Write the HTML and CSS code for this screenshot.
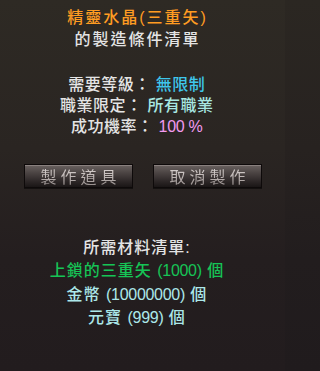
FILE: index.html
```html
<!DOCTYPE html>
<html lang="zh-Hant">
<head>
<meta charset="utf-8">
<title>製造條件清單</title>
<link rel="stylesheet" href="styles.css">
</head>
<body>
<div class="panel">
  <div class="title">
    <div class="line orange">精靈水晶(三重矢)</div>
    <div class="line">的製造條件清單</div>
  </div>
  <div class="info">
    <div class="line">需要等級： <span class="cyan">無限制</span></div>
    <div class="line">職業限定： <span class="pale">所有職業</span></div>
    <div class="line">成功機率： <span class="pink"><span class="num">100 %</span></span></div>
  </div>
  <div class="buttons">
    <button class="btn"><span class="btn-text">製作道具</span></button>
    <button class="btn"><span class="btn-text">取消製作</span></button>
  </div>
  <div class="materials">
    <div class="line">所需材料清單:</div>
    <div class="line green">上鎖的三重矢 <span class="num">(1000)</span> 個</div>
    <div class="line pale2">金幣 <span class="num">(10000000)</span> 個</div>
    <div class="line pale2">元寶 <span class="num">(999)</span> 個</div>
  </div>
</div>
</body>
</html>
```
FILE: styles.css
```css
html {
  margin: 0;
  padding: 0;
  background: linear-gradient(180deg, #2b2722 0%, #272220 40%, #221d1e 70%, #201b1d 100%);
  min-height: 100%;
}
body {
  margin: 0;
  padding: 0;
  width: 285px;
  height: 371px;
  overflow: hidden;
}
.panel {
  width: 285px;
  height: 371px;
  box-sizing: border-box;
  padding-top: 7px;
  background: linear-gradient(180deg, #2e2a24 0%, #2a2522 40%, #241e1f 70%, #221c1e 100%);
  font-family: "Liberation Sans", "Noto Sans CJK TC", sans-serif;
  font-size: 16px;
  font-weight: 500;
  color: #e4e4e4;
  text-align: center;
  display: flex;
  flex-direction: column;
}
.title,
.info,
.materials {
  padding-right: 12px;
}
.title .line {
  line-height: 22px;
  letter-spacing: 2px;
  padding-left: 2px;
}
.orange { color: #ff9c22; }
.info {
  margin-top: 23px;
}
.info .line {
  line-height: 21px;
  letter-spacing: 0.5px;
  padding-left: 0.5px;
}
.cyan { color: #3ec6ec; }
.pale { color: #a8e8e2; }
.pink { color: #f29af0; }
.num {
  letter-spacing: -0.3px;
}
.buttons {
  margin-top: 27px;
  display: flex;
  justify-content: center;
  gap: 20px;
  padding-left: 1px;
}
.btn {
  width: 109px;
  height: 24px;
  margin: 0;
  padding: 0 0 0 4px;
  border: 1px solid #0e0a0a;
  background: linear-gradient(180deg, #6a6260 0%, #4c4544 35%, #2c2626 75%, #1a1616 100%);
  box-shadow: inset 0 1px 0 rgba(200, 190, 185, 0.35), 0 1px 0 rgba(0, 0, 0, 0.5);
  font-family: "Noto Sans CJK TC", sans-serif;
  font-size: 16px;
  letter-spacing: 4px;
  line-height: 22px;
}
.btn-text {
  background: linear-gradient(180deg, #e6e0de 0%, #bdb5b3 55%, #8a8280 100%);
  -webkit-background-clip: text;
  background-clip: text;
  color: transparent;
}
.materials {
  margin-top: 48px;
}
.materials .line {
  line-height: 23.4px;
  letter-spacing: 1px;
  padding-left: 1px;
}
.green { color: #16c456; }
.pale2 { color: #ace8ea; }
```
